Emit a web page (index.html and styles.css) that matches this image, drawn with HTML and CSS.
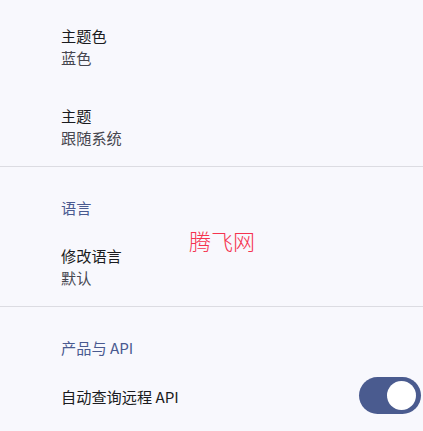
FILE: index.html
```html
<!DOCTYPE html>
<html lang="zh-CN">
<head>
<meta charset="utf-8">
<title>设置</title>
<link rel="stylesheet" href="styles.css">
</head>
<body>
<div class="list">
  <div class="item">
    <div class="title">主题色</div>
    <div class="sub">蓝色</div>
  </div>
  <div class="item">
    <div class="title">主题</div>
    <div class="sub">跟随系统</div>
  </div>
  <div class="divider"></div>
  <div class="header">语言</div>
  <div class="item">
    <div class="title">修改语言</div>
    <div class="sub">默认</div>
  </div>
  <div class="divider"></div>
  <div class="header">产品与 API</div>
  <div class="item single">
    <div class="title">自动查询远程 API</div>
    <div class="switch"><div class="thumb"></div></div>
  </div>
</div>
<div class="watermark">腾飞网</div>
</body>
</html>
```
FILE: styles.css
```css
html, body {
  margin: 0;
  padding: 0;
  background: #f8f8fd;
  font-family: "Noto Sans CJK SC", "Noto Sans", sans-serif;
  overflow: hidden;
}
.list {
  padding-top: 6px;
  display: flex;
  flex-direction: column;
}
.item {
  height: 80px;
  box-sizing: border-box;
  padding: 0 2px 0 61px;
  display: flex;
  flex-direction: column;
  justify-content: center;
}
.title {
  font-size: 15.2px;
  line-height: 22px;
  color: #1a1b20;
}
.sub {
  font-size: 15.2px;
  line-height: 22px;
  color: #46464f;
}
.divider {
  height: 1px;
  background: #dcdce2;
}
.header {
  box-sizing: border-box;
  height: 59px;
  padding: 27.5px 0 0 61px;
  font-size: 15.2px;
  line-height: 24px;
  color: #4a5a90;
}
.item.single {
  height: 60px;
  flex-direction: row;
  align-items: center;
  justify-content: space-between;
}
.switch {
  width: 62px;
  height: 37px;
  border-radius: 19px;
  background: #4a5b8f;
  display: flex;
  align-items: center;
  justify-content: flex-end;
  padding-right: 5px;
  box-sizing: border-box;
  margin-top: -2px;
}
.thumb {
  width: 29px;
  height: 29px;
  border-radius: 50%;
  background: #ffffff;
}
.watermark {
  position: absolute;
  left: 189px;
  top: 225px;
  font-size: 22px;
  line-height: 30px;
  font-weight: 300;
  color: #f5334f;
}
```
